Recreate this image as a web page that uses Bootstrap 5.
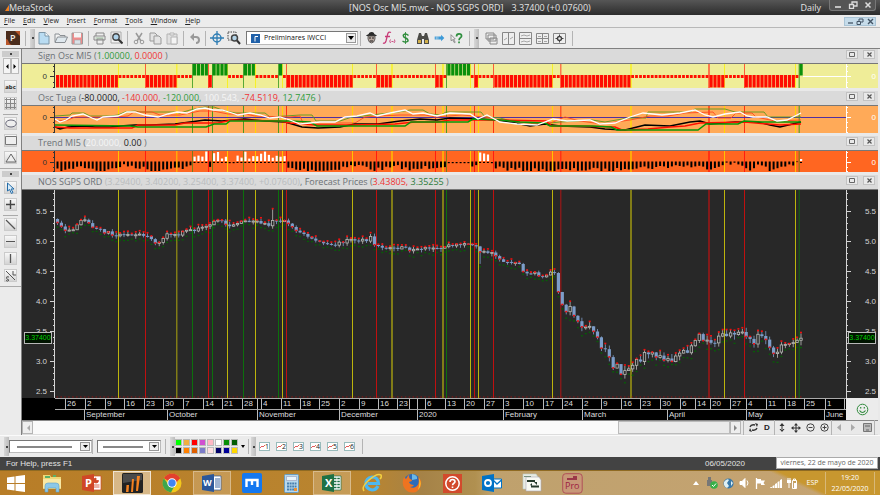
<!DOCTYPE html>
<html lang="en">
<head>
<meta charset="utf-8">
<meta name="viewport" content="width=device-width, initial-scale=1">
<title>MetaStock - NOS SGPS ORD</title>
<link href="https://cdn.jsdelivr.net/npm/bootstrap@5.3.0/dist/css/bootstrap.min.css" rel="stylesheet">
<style>
:root{--ui:"Open Sans","Noto Sans",sans-serif;--arial:"Liberation Sans",Arial,sans-serif}
body{font-family:var(--ui);font-size:8px;line-height:12px;color:#222;background:#e9e9e9;min-height:100vh}
button,select{font-family:inherit;font-size:inherit;line-height:inherit;color:inherit}
svg{display:block;flex:none}
.tbtn{border:0;background:none;padding:0;width:17px;height:17px;display:flex;align-items:center;justify-content:center;flex:none}
.titlebar{height:15px;background:linear-gradient(#565656,#2c2c2c);color:#e4e4e4;font-size:9px;line-height:16px}
.brand-area{width:349px}
.wbtns{height:11px;border-radius:0 0 3px 3px;background:#555;border:1px solid #777;border-top:0}
.wbtns .tbtn{width:15px;height:10px}
.menubar{height:13px;border-bottom:1px solid #b8b8b8;background:#ececec}
.menubar a{color:#222;text-decoration:none;font-size:7px;line-height:12px;margin-right:8px}
.menubar a::first-letter{text-decoration:underline}
.mdi{background:#c6dcea;border:1px solid #a9c4d6;height:9px}
.mdi .tbtn{width:10px;height:7px}
.toolbar{height:21px;border-bottom:1px solid #808080;background:#ebebeb}
.vsep{width:1px;height:15px;background:#b4b4b4;margin:0 2px;flex:none}
.grip{width:5px;height:19px;background:linear-gradient(90deg,#d8d8d8,#bdbdbd);flex:none;display:flex;align-items:center;justify-content:center}
.grip::after{content:"";width:2px;height:2px;background:#444}
.combo{background:#fff;border:1px solid #777;border-right-color:#bbb;border-bottom-color:#bbb}
.combo select{appearance:none;border:0;background:transparent;padding:0;min-width:0;outline:0}
.combo .arrow{width:10px;background:#eee;border:1px solid #999;margin:1px;display:flex;align-items:center;justify-content:center;pointer-events:none}
.toolbar .combo{height:14px;width:112px}
.toolbar .combo .arrow{margin-left:auto}
.tpl{width:84px;font-size:7px;color:#111}
.main-area{padding-right:2px}
.tools{width:22px;background:#ebebeb;border-right:1px solid #808080;flex:none;padding-top:2px}
.tools .tbtn{width:13px;height:13px;margin:0 auto 4px;background:linear-gradient(#f8f8f8,#d4d4d4);border:1px solid #cbcbcb}
.tools .pair{margin:0 auto 6px}
.tools .pair .tbtn{width:8px;height:16px;margin:0;border-color:#bbb;background:#f4f4f4}
.tools .hgrip{height:6px;background:#ccc;display:flex;align-items:center;justify-content:center;margin:0 2px 1px}
.tools .hgrip::after{content:"";width:2px;height:2px;background:#444}
.tools hr{margin:0 3px 2px;border:0;border-top:1px solid #aaa;opacity:1}
.tools hr.full{margin:0 0 2px}
.abc{font-size:6px;font-weight:700;line-height:8px}
.chart-title{height:15px;background:#dadada;border-bottom:1px solid #777;color:#6c7176;font-size:9px;line-height:14px;padding-left:16px;padding-right:2px}
.chart-title .tbtn{width:12px;height:9px;background:#e9e9e9;border:1px solid #c2c2c2;margin:1px 1px 4px}
.g{color:#2f9a3a}.r{color:#f03434}.k{color:#222}.w{color:#f6f6f6}.dim{color:#b9bcbe}.dg{color:#2c7a3a}
.strip{border-bottom:3px solid #e9e9e9}
.h-sign{height:24px;background:#efed98}
.h-osc{height:27px;background:#ffaa58}
.h-trend{height:21px;background:#ff6621}
.h-price{min-height:208px;background:#282828}
.axis-l{width:33px;flex:none;position:relative}
.axis-r{width:32px;flex:none;position:relative}
.axis-l svg,.axis-r svg,.plot svg{position:absolute;inset:0;width:100%;height:100%}
.plot{position:relative;flex:1 1 0;min-width:0}
.tick-label{position:absolute;transform:translateY(-50%);font-family:var(--arial);font-size:8px;line-height:10px}
.axis-l .tick-label{right:8px}
.axis-r .tick-label{right:2px}
.axis-l .price-tag{right:3px}
.price-tag{background:#001400;color:#00d000;border:1px solid #b8b8b8;padding:0;width:28px;text-align:center;font-size:7px}
.dates{height:23px;background:#000;color:#ddd;font-family:var(--arial);font-size:8px;line-height:10px;border-bottom:1px solid #888}
.dates .pad-l{width:33px;flex:none}
.dates .smile{width:32px;flex:none;background:#ececec}
.cal{flex:1 1 0;min-width:0}
.cal>div{height:11px;border-top:1px solid #aaa}
.cell{flex:none;border-left:1px solid #bbb;padding-left:1px;white-space:nowrap;height:10px}
.cell.lead-in{border-left:0}
.scroller{height:14px;border-bottom:1px solid #ddd}
.scroller .sb{width:12px;height:13px;border:1px solid #b5b5b5;background:#eee}
.scroller .track{background:#fafafa;flex:1 1 0}
.scroller .thumb{width:16%;background:#eaeaea;border:1px solid #bbb}
.scroller .tbtn{width:14px;height:13px}
.scroller .sb.tbtn{width:11px}
.scroller .right{width:137px;flex:none}
.periodicity{font-family:var(--arial);font-weight:700;font-size:8px}
.bottombar{height:22px;background:#ebebeb;border-top:1px solid #fafafa}
.bottombar .combo{height:13px}
.bottombar .combo select{flex:1;background:linear-gradient(#888,#888) center/80% 2px no-repeat}
.style-combo{width:83px}
.weight-combo{width:64px}
.swatches{display:grid;grid-template-columns:repeat(8,8px);grid-auto-rows:8px}
.swatches button{width:7px;height:7px;border:1px solid #bbb;padding:0}
.tbtn.more{width:7px}
.num{border:1px solid #9bb;background:#fff;width:11px;height:9px;color:#222;font-size:7px;line-height:7px;display:flex;align-items:center;justify-content:flex-end}
.statusbar{height:13px;background:#434343;color:#e2e2e2;font-family:var(--arial);font-size:8px;line-height:13px;position:relative}
.help-text{padding-left:6px}
.status-date{padding-right:135px}
.hint{position:absolute;right:2px;top:0;height:12px;width:102px;background:#fff;color:#666;border:1px solid #aaa;font-family:var(--ui);font-size:7px;line-height:10px;text-align:center;white-space:nowrap}
.taskbar{height:25px;border-top:1px solid #8f6a22;background:linear-gradient(205deg,#c8972f 0,#c8972f 11%,transparent 12%),linear-gradient(90deg,#b87d27 0,#b98530 42%,#a58247 48%,#b09050 54%,#bfa16d 56%,#c6a473 100%);color:#fff}
.taskbar .app{width:40px;height:24px;border:1px solid transparent;background:none;padding:0;display:flex;align-items:center;justify-content:center;flex:none}
.taskbar .app.winkey{width:32px}
.taskbar .app.open{background:#ffffff30;border-color:#ffffff50;margin:0 1px;width:38px}
.taskbar .app.active{background:#ffffff70;border-color:#ffffffa0}
.tray .tbtn{width:16px}
.lang{font-size:7px;width:25px}
.clock{width:50px;font-size:7px;line-height:11px;border-left:1px solid #d8b878;border-right:1px solid #d8b878}
.edge{width:5px}
</style>
<script src="https://cdn.jsdelivr.net/npm/bootstrap@5.3.0/dist/js/bootstrap.bundle.min.js"></script>
</head>
<body class="d-flex flex-column m-0">

<header class="titlebar d-flex">
  <div class="brand-area d-flex align-items-center">
    <svg class="ms-1" width="5" height="9" viewBox="0 0 5 9"><path d="M1 8 5 2v6z" fill="#f08020"/></svg><span class="fs-brand">MetaStock</span>
  </div>
  <div class="text-nowrap">[NOS Osc MI5.mwc - NOS SGPS ORD]<span class="ms-2">3.37400 (+0.07600)</span></div>
  <div class="ms-auto me-2">Daily</div>
  <div class="wbtns d-flex me-1">
    <button class="tbtn" aria-label="Minimize"><svg width="8" height="8"><path d="M1 6h6" stroke="#ddd" stroke-width="1.6"/></svg></button>
    <button class="tbtn" aria-label="Restore"><svg width="10" height="8" fill="none" stroke="#ddd"><path d="M4 4V1h5v4H6M1.500 3.500h4v4h-4z" stroke-width="1.300"/></svg></button>
    <button class="tbtn" aria-label="Close"><svg width="8" height="8"><path d="m1.500 1.500 5 5m0-5-5 5" stroke="#ddd" stroke-width="1.500"/></svg></button>
  </div>
</header>

<nav class="menubar d-flex align-items-center ps-1" aria-label="Menu">
  <a href="#">File</a><a href="#">Edit</a><a href="#">View</a><a href="#">Insert</a><a href="#">Format</a><a href="#">Tools</a><a href="#">Window</a><a href="#">Help</a>
  <div class="mdi d-flex ms-auto me-1">
    <button class="tbtn" aria-label="Minimize chart"><svg width="7" height="6"><path d="M1 5h5" stroke="#456" stroke-width="1.300"/></svg></button>
    <button class="tbtn" aria-label="Restore chart"><svg width="8" height="7" fill="none" stroke="#456"><path d="M3 3V1h4v3H5M1 3.500h3.500v3H1z"/></svg></button>
    <button class="tbtn" aria-label="Close chart"><svg width="7" height="7"><path d="m1 1 5 5m0-5-5 5" stroke="#456" stroke-width="1.400"/></svg></button>
  </div>
</nav>

<div class="toolbar d-flex align-items-center" role="toolbar" aria-label="Standard">
  <button class="tbtn ms-1" aria-label="Power Console"><svg width="14" height="14"><rect width="14" height="14" fill="#4a2c1c"/><path d="M0 8c3 0 2 5 6 6H0zM9 0h5v5z" fill="#b8562a"/><text x="4" y="10" font-size="9" font-weight="600" fill="#f5eee8">P</text></svg></button>
  <span class="vsep ms-1 me-1"></span><span class="grip"></span>
  <button class="tbtn" aria-label="New"><svg width="12" height="14"><path d="M1 1.500h6l4 3.500v8H1z" fill="#b9dcf2" stroke="#7d97a8"/><path d="M7 1.500V5h4" fill="#fff" stroke="#7d97a8"/></svg></button>
  <button class="tbtn" aria-label="Open"><svg width="14" height="12"><path d="M1 10V2h4l1 1.500h5V5" fill="#f4f4f4" stroke="#8a8f94"/><path d="M1 10.500 3.500 5h10L11 10.500z" fill="#dfe8ee" stroke="#8a8f94"/></svg></button>
  <button class="tbtn" aria-label="Save"><svg width="13" height="13"><path d="M1 1h10.500v11H1z" fill="#f08c8c" stroke="#9a9a9a"/><path d="M3 1h7v4.500H3z" fill="#f5f5f5"/><path d="M3.500 8h6v4h-6z" fill="#d9e2e8" stroke="#aaa" stroke-width=".6"/></svg></button>
  <span class="vsep"></span>
  <button class="tbtn" aria-label="Print"><svg width="13" height="13" fill="#eee" stroke="#888"><path d="M3 4V1h8v3M1 4h11v4H1zM4 7h6v5H4z"/><path d="M2.500 6h8" stroke="#9b9"/></svg></button>
  <button class="tbtn" aria-label="Preview"><svg width="13" height="14"><path d="M1 1h10v11H1z" fill="#f2f2f2" stroke="#aaa"/><circle cx="6" cy="6" r="3.200" fill="#aed2ea" stroke="#444" stroke-width="1.400"/><path d="m8.500 8.500 4 4" stroke="#333" stroke-width="2"/></svg></button>
  <span class="vsep"></span>
  <button class="tbtn" aria-label="Cut"><svg width="12" height="13" fill="none" stroke="#999"><path d="m3 1 5 8M9 1 4 9" stroke-width="1.500"/><circle cx="3" cy="10" r="1.800"/><circle cx="9" cy="10" r="1.800"/></svg></button>
  <button class="tbtn" aria-label="Copy"><svg width="13" height="13" fill="#e4e4e4" stroke="#999"><path d="M1 1h5l2 2v6H1z"/><path d="M5 4h5l2 2v6H5z"/></svg></button>
  <button class="tbtn" aria-label="Paste"><svg width="13" height="13" fill="#e0e0e0" stroke="#b4b4b4"><path d="M1 2h10v10H1z"/><path d="M4 1h4v2H4zM5 5h6v7H5z" fill="#f4f4f4"/></svg></button>
  <span class="vsep"></span>
  <button class="tbtn" aria-label="Undo"><svg width="12" height="12"><path d="M3 5h4q3 0 3 3t-3 3" fill="none" stroke="#999" stroke-width="2"/><path d="M1 5l4-4v8z" fill="#999"/></svg></button>
  <span class="vsep"></span>
  <button class="tbtn" aria-label="Crosshair"><svg width="14" height="14" fill="none" stroke="#2f7db4"><circle cx="7" cy="7" r="4" stroke-width="1.400"/><path d="M7 0v14M0 7h14" stroke-width="1.300"/></svg></button>
  <button class="tbtn" aria-label="Zoom box"><svg width="14" height="14"><path d="M1 1h8v8H1z" fill="none" stroke="#444" stroke-dasharray="1.500 1"/><circle cx="7.500" cy="7" r="3" fill="#b4d4e8" stroke="#444" stroke-width="1.500"/><path d="m10 9.500 3 3.500" stroke="#333" stroke-width="2"/></svg></button>
  <div class="combo d-flex align-items-center ms-1">
    <svg class="ms-1" width="9" height="9"><rect width="9" height="9" fill="#1e5fa8"/><path d="M4 7.500v-5h3" stroke="#fff" fill="none"/></svg>
    <select aria-label="Template" class="ms-1 tpl"><option>Preliminares IWCCI</option></select>
    <span class="arrow align-self-stretch"><svg width="6" height="4"><path d="M0 0h6L3 4z"/></svg></span>
  </div>
  <span class="vsep"></span>
  <button class="tbtn" aria-label="Expert Advisor"><svg width="13" height="14"><path d="M1 5c1-2 3-1 3-3q3-2 5 0c0 2 2 1 3 3z" fill="#2a2a2a"/><path d="M3 5h7v3q-1 4-3.500 4T3 8z" fill="#b8a8a0" stroke="#444" stroke-width=".8"/><path d="M4 7h2m1 0h2M5 10h3" stroke="#222"/></svg></button>
  <button class="tbtn" aria-label="Indicator Builder"><svg width="14" height="14" fill="none" stroke="#c83c78"><path d="M9 1.500Q6 0 5.500 4L4 10q-1 3-3 2M3 5.500h5" stroke-width="1.300"/><path d="M8.500 8.500q-1.500 1.500 0 3.500m4-3.500q1 2-.5 3.500M9.500 10.500h2" stroke-width=".9"/></svg></button>
  <button class="tbtn" aria-label="System Tester"><svg width="9" height="12" viewBox="0 0 10 14" fill="none" stroke="#2e8b3a"><path d="M8.500 4Q5 1 2.500 3.500 2 6 5 7t3 3.500Q5 13 1.500 10.500" stroke-width="1.700"/><path d="M5 0v14"/></svg></button>
  <button class="tbtn" aria-label="Explorer"><svg width="14" height="13" fill="#4c4c48"><path d="M3 1h2l1 3h2l1-3h2l2 7v4H8V7H6v5H1V8z"/><path d="M2 8h3v3H2zM9 8h3v3H9z" fill="#d2b04a"/></svg></button>
  <button class="tbtn" aria-label="Downloader"><svg width="13" height="8" viewBox="0 0 14 10"><path d="M1 3h8V1l4 4-4 4V7H1z" fill="#3c9ad8"/><path d="M3 3v4m2-4v4" stroke="#ebebeb" stroke-width=".7"/></svg></button>
  <button class="tbtn" aria-label="Help pointer"><svg width="13" height="11" viewBox="0 0 15 13" fill="none"><path d="m1 2 5 5-2 .5L6 11l-1 .5L3 8 1 9z" fill="#eee" stroke="#666" stroke-width=".8"/><path d="M7.500 4q0-3 3-3t3 2.500c0 2-3 2-3 5M10.500 10v2" stroke="#2f8f3f" stroke-width="2"/></svg></button>
  <span class="vsep ms-1 me-1"></span><span class="grip"></span>
  <button class="tbtn ms-1" aria-label="Cascade"><svg width="13" height="13" fill="#eee" stroke="#888"><path d="M1 1h8v6H1zM3 3h8v6H3zM5 6h7v6H5z"/></svg></button>
  <button class="tbtn" aria-label="Tile columns"><svg width="13" height="13" fill="#eee" stroke="#888"><path d="M.5.5h12v12H.5zM6.500.5v12"/><path d="M2 8l3-2m3 1 3-2" stroke-width=".7"/></svg></button>
  <button class="tbtn" aria-label="Tile rows"><svg width="13" height="13" fill="#eee" stroke="#888"><path d="M.5.5h12v12H.5zM.5 6.500h12"/><path d="M2 4l3-1 3 1 3-1M2 10l3-1 3 1 3-1" stroke-width=".7"/></svg></button>
  <button class="tbtn" aria-label="Tile"><svg width="13" height="11" fill="#eee" stroke="#888"><path d="M.5.5h12v10H.5zM6.500.5v10M.5 5.500h12"/><path d="M2 3.500h3m3 0h3M2 8.500h3m3 0h3" stroke-width=".7"/></svg></button>
  <button class="tbtn" aria-label="Options"><svg width="13" height="11" fill="#eee" stroke="#888"><path d="M.5.5h12v10H.5z"/><circle cx="6.500" cy="5.500" r="2" stroke="#444" stroke-width="1.400"/><path d="M6.500 1.500v8m-4-4h8" stroke-dasharray="1.500 5" stroke="#444"/></svg></button>
  <span class="vsep ms-1"></span>
</div>

<main class="main-area d-flex flex-grow-1">
  <aside class="tools d-flex flex-column" aria-label="Drawing tools">
    <div class="hgrip"></div>
    <div class="pair d-flex"><button class="tbtn" aria-label="Previous"><svg width="4" height="5"><path d="M3.500 0v5L1 2.500z"/></svg></button><button class="tbtn" aria-label="Next"><svg width="4" height="5"><path d="M.5 0v5L3 2.500z"/></svg></button></div>
    <button class="tbtn" aria-label="Text"><span class="abc">abc</span></button>
    <button class="tbtn" aria-label="Grid"><svg width="11" height="11" stroke="#888"><path d="M1.500 0v11m4-11v11m4-11v11M0 1.500h11m-11 4h11m-11 4h11"/></svg></button>
    <hr>
    <button class="tbtn" aria-label="Ellipse"><svg width="12" height="9"><ellipse cx="6" cy="4.500" rx="5.300" ry="3.500" fill="#eee" stroke="#667"/></svg></button>
    <button class="tbtn" aria-label="Rectangle"><svg width="12" height="9"><path d="M.5.5h11v8H.5z" fill="#eee" stroke="#777"/></svg></button>
    <button class="tbtn" aria-label="Triangle"><svg width="12" height="10"><path d="M6 1l5 8H1z" fill="#eee" stroke="#666"/></svg></button>
    <hr class="full"><div class="hgrip mb-1"></div>
    <button class="tbtn" aria-label="Select"><svg width="9" height="12"><path d="M1.500 1v8l2-1.500 2 4 1.500-1-2-3.500H8z" fill="#d8ecfa" stroke="#246ca8"/></svg></button>
    <button class="tbtn" aria-label="Add"><svg width="11" height="11"><path d="M5.500 1v9M1 5.500h9" stroke="#444" stroke-width="1.400"/></svg></button>
    <hr>
    <button class="tbtn" aria-label="Trend line"><svg width="11" height="11"><path d="m1 1 9 9" stroke="#555" stroke-width="1.200"/></svg></button>
    <button class="tbtn" aria-label="Horizontal line"><svg width="11" height="11"><path d="M1 5.500h9" stroke="#555"/></svg></button>
    <button class="tbtn" aria-label="Vertical line"><svg width="11" height="11"><path d="M5.500 1v9" stroke="#555" stroke-width="1.300"/></svg></button>
    <button class="tbtn" aria-label="Speed line"><svg width="12" height="12" fill="none" stroke="#555"><path d="m1 1 9 9M8 1v4h3M4 7Q1 6 1.500 8T4 10q-1 2-3 .5"/></svg></button>
    <hr class="full">
  </aside>

  <section class="flex-grow-1 d-flex flex-column">
    <div class="chart-title d-flex"><span>Sign Osc MI5 (<span class="g">1.00000,</span> <span class="r">0.0000</span> )</span><span class="winbtns d-flex ms-auto"></span></div>
    <div class="strip"><div class="h-sign d-flex" data-chart="sign"></div></div>
    <div class="chart-title d-flex"><span>Osc Tuga (<span class="k">-80.0000,</span> <span class="r">-140.000,</span> <span class="g">-120.000,</span> <span class="w">100.543,</span> <span class="r">-74.5119,</span> <span class="g">12.7476</span> )</span><span class="winbtns d-flex ms-auto"></span></div>
    <div class="strip"><div class="h-osc d-flex" data-chart="osc"></div></div>
    <div class="chart-title d-flex"><span>Trend MI5 (<span class="w">20.0000,</span> <span class="k">0.00</span> )</span><span class="winbtns d-flex ms-auto"></span></div>
    <div class="strip"><div class="h-trend d-flex" data-chart="trend"></div></div>
    <div class="chart-title d-flex"><span>NOS SGPS ORD <span class="dim">(3.29400, 3.40200, 3.25400, 3.37400, +0.07600)</span>, Forecast Prices (<span class="r">3.43805,</span> <span class="dg">3.35255</span> )</span><span class="winbtns d-flex ms-auto"></span></div>
    <div class="h-price d-flex flex-grow-1" data-chart="price"></div>
    <div class="dates d-flex"><div class="pad-l"></div><div class="cal"><div class="d-flex" id="weeks"></div><div class="d-flex" id="months"></div></div>
      <div class="smile d-flex align-items-center justify-content-center"><svg width="13" height="13" fill="none" stroke="#2f8a3c"><circle cx="6.500" cy="6.500" r="5.300"/><path d="M3.500 7.500q3 4 6 0M4.700 4v1.500M8.300 4v1.500" stroke-width="1.200"/></svg></div></div>
    <div class="scroller d-flex align-items-center">
      <button class="sb tbtn" aria-label="Scroll left"><svg width="4" height="6"><path d="M4 0v6L1 3z" fill="#aaa"/></svg></button>
      <div class="track d-flex justify-content-end align-self-stretch"><div class="thumb"></div></div>
      <button class="sb tbtn" aria-label="Scroll right"><svg width="4" height="6"><path d="M0 0v6l3-3z" fill="#888"/></svg></button>
      <div class="right d-flex align-items-center">
        <span class="vsep"></span>
        <button class="tbtn" aria-label="Refresh"><svg width="9" height="9" fill="none" stroke="#333" stroke-width="1.300"><path d="M1 4q1-3 5-2M8 5q-1 3-5 2"/><path d="M6 0l3 1-1 3zM3 9 0 8l1-3z" fill="#333" stroke="none"/></svg></button>
        <button class="tbtn periodicity" aria-label="Daily periodicity">D</button>
        <span class="vsep mx-0"></span>
        <button class="tbtn" aria-label="Vertical fit"><svg width="6" height="9"><path d="M3 0l2.500 3h-5zM3 9l2.500-3h-5zM2.500 2h1v5h-1z" fill="#333"/></svg></button>
        <button class="tbtn" aria-label="Pan"><svg width="10" height="10"><path d="M5 1v8M1 5h8" stroke="#333"/><path d="M5 0l2 2.500H3zM5 10l2-2.500H3zM0 5l2.500-2v4zM10 5 7.500 3v4z" fill="#333"/></svg></button>
        <button class="tbtn" aria-label="Zoom out"><svg width="9" height="9" fill="none" stroke="#444"><circle cx="4.500" cy="4.500" r="3.700"/><path d="M2.500 4.500h4"/></svg></button>
        <button class="tbtn" aria-label="Zoom in"><svg width="9" height="9" fill="none" stroke="#444"><circle cx="4.500" cy="4.500" r="3.700"/><path d="M2.500 4.500h4m-2-2v4"/></svg></button>
        <span class="vsep mx-0"></span>
        <button class="tbtn" aria-label="Back"><svg width="4" height="7"><path d="M4 0v7L0 3.500z" fill="#aaa"/></svg></button>
        <button class="tbtn" aria-label="Forward"><svg width="4" height="7"><path d="M0 0v7l4-3.500z" fill="#aaa"/></svg></button>
        <button class="tbtn" aria-label="Disk"><svg width="9" height="9"><path d="M.5.5h8v8h-8z" fill="#bbb" stroke="#777"/><path d="M2 3h5M3 7h3" stroke="#666"/></svg></button>
        <span class="vsep mx-0"></span>
      </div>
    </div>
  </section>
</main>

<div class="bottombar d-flex align-items-center" role="toolbar" aria-label="Line style">
  <span class="grip ms-1"></span>
  <div class="combo d-flex align-items-stretch style-combo"><select aria-label="Line style"><option></option></select><span class="arrow"><svg width="5" height="3"><path d="M0 0h5L2.500 3z"/></svg></span></div>
  <span class="vsep mx-1 ms-0"></span>
  <div class="combo d-flex align-items-stretch weight-combo"><select aria-label="Line weight"><option></option></select><span class="arrow"><svg width="5" height="3"><path d="M0 0h5L2.500 3z"/></svg></span></div>
  <span class="vsep mx-1"></span><span class="grip"></span>
  <div class="swatches" id="swatches"></div>
  <button class="tbtn more" aria-label="More colours"><svg width="4" height="3"><path d="M0 0h4L2 3z"/></svg></button>
  <span class="vsep"></span><span class="grip"></span>
  <div class="d-flex" id="layouts"></div>
  <span class="vsep ms-1"></span>
</div>

<footer class="statusbar d-flex">
  <span class="help-text">For Help, press F1</span>
  <span class="status-date ms-auto">06/05/2020</span>
  <div class="hint" role="tooltip">viernes, 22 de mayo de 2020</div>
</footer>

<nav class="taskbar d-flex align-items-center" aria-label="Taskbar">
  <button class="app winkey" aria-label="Start"><svg width="18" height="17" fill="#fff"><path d="m0 2.500 7.500-1v6.500H0zM8.500 1.300 18 0v8H8.500zM0 9h7.500v6.500L0 14.500zM8.500 9H18v8l-9.500-1.300z"/></svg></button>
  <button class="app" aria-label="File Explorer"><svg width="21" height="20"><path d="M1 2h7l1 2h10v12H1z" fill="#f0d878"/><path d="M3 3h5v2H3zM11 2h3v2h-3z" fill="#5bb06a"/><path d="M1 6h18v9H1z" fill="#f8e8a4"/><path d="M3 19v-6q0-3 3-3h8q3 0 3 3v6h-3v-4H6v4z" fill="#8cc8e8" stroke="#5fa0c8" stroke-width=".6"/></svg></button>
  <button class="app" aria-label="PowerPoint"><svg width="20" height="20"><path d="M9 3h10v14H9z" fill="#fff" stroke="#d04727" stroke-width=".7"/><path d="M14 5a2.500 2.500 0 1 0 2.500 2.500H14zM11.500 12h6m-6 2h6" fill="#d04727" stroke="#d04727" stroke-width=".8"/><path d="M0 3 12 1v18L0 17z" fill="#d04727"/><text x="3" y="14" font-size="11" font-weight="700" fill="#fff">P</text></svg></button>
  <button class="app open active" aria-label="MetaStock"><svg width="21" height="20"><rect width="21" height="20" rx="1.500" fill="#222"/><path d="M1 1h19v6L1 10z" fill="#666" opacity=".6"/><path d="m4 19 .5-7H7l-.5 7zM9 19l1-13h2l-1 13zM14 18l1-15h3l-2 15z" fill="#f58220"/></svg></button>
  <button class="app" aria-label="Chrome"><svg width="20" height="20"><circle cx="10" cy="10" r="9.500" fill="#f3c81c"/><path d="M10 10 1.800 5.200A9.500 9.500 0 0 1 18.200 5.200z" fill="#e2412e"/><path d="M1.800 5.200A9.500 9.500 0 0 0 9 19.500L13 12 6 11z" fill="#3ea64c"/><path d="M10 5h8.200L14 10z" fill="#e2412e"/><circle cx="10" cy="10" r="4.700" fill="#fff"/><circle cx="10" cy="10" r="3.700" fill="#4285f4"/></svg></button>
  <button class="app open" aria-label="Word"><svg width="20" height="20"><path d="M9 3h10v14H9z" fill="#fff" stroke="#2b579a" stroke-width=".7"/><path d="M13 6h5m-5 2h5m-5 2h5m-5 2h5m-5 2h5" stroke="#2b579a" stroke-width=".9"/><path d="M0 3 12 1v18L0 17z" fill="#2b579a"/><text x="1" y="13" font-size="9" font-weight="700" fill="#fff">W</text></svg></button>
  <button class="app" aria-label="Maxthon"><svg width="20" height="20"><rect width="20" height="20" rx="2" fill="#1478f0"/><path d="M4.500 14V7h11v7M10 8v4" fill="none" stroke="#fff" stroke-width="2.400"/></svg></button>
  <button class="app" aria-label="Calculator"><svg width="16" height="19"><rect x=".5" y=".5" width="14" height="18" rx="1" fill="#b8d8ec" stroke="#6a9cc0"/><path d="M2.500 2.500h10v4h-10z" fill="#e8f4fc" stroke="#88a" stroke-width=".5"/><path d="M3 9.500h9.500M3 12.500h9.500M3 15.500h9.500" stroke="#4880b0" stroke-width="2" stroke-dasharray="2 .6"/><path d="M10 14h3v3h-3z" fill="#f09030"/></svg></button>
  <button class="app open" aria-label="Excel"><svg width="20" height="20"><path d="M9 3h10v14H9z" fill="#fff" stroke="#1e7145" stroke-width=".7"/><path d="M12 5.500h6m-6 3h6m-6 3h6m-6 3h6" stroke="#1e7145" stroke-width="1.600" stroke-dasharray="2.500 .8"/><path d="M0 3 12 1v18L0 17z" fill="#1e7145"/><text x="3" y="14" font-size="11" font-weight="700" fill="#fff">X</text></svg></button>
  <button class="app" aria-label="Internet Explorer"><svg width="20" height="20" fill="none"><path d="M16 13q-2 4-6 4-6-1-6-6.500T10 4q6 0 6.500 6.500H6" stroke="#4cb8f0" stroke-width="3.200"/><path d="M2 18Q-1 14 7 7t12-5q1 2-1 4" stroke="#f4d040" stroke-width="1.500"/></svg></button>
  <button class="app" aria-label="Firefox"><svg width="20" height="20"><circle cx="10" cy="9.500" r="8.500" fill="#2c6cb8"/><path d="M10 1q6 1 5 5l-5 1z" fill="#6ab8e8"/><path d="M2 4q-3 7 1 12t11 3q6-4 5-11-1-3-3-4 2 6-1 9t-7 1q3 0 4-2-4 0-5-3l3-1q0-2-2-2-2-3 0-5Q5 3 4 6z" fill="#ee7420"/><path d="M17 5q4 7-1 12 2-6 1-12z" fill="#f8c030"/></svg></button>
  <button class="app" aria-label="Help"><svg width="19" height="19"><rect width="19" height="19" fill="#d24a2c"/><circle cx="9.500" cy="9.500" r="6.700" fill="none" stroke="#fff" stroke-width="1.500"/><path d="M7 8q0-2.500 2.500-2.500T12 7.800c0 1.500-2.500 1.500-2.500 3.500M9.500 12.500v1.600" stroke="#fff" stroke-width="1.600" fill="none"/></svg></button>
  <button class="app" aria-label="Outlook"><svg width="20" height="20"><path d="M10 6h9.500v9H10z" fill="#fff" stroke="#0072c6"/><path d="m11 7 4 4 4.500-4" fill="none" stroke="#0072c6" stroke-width="1.300"/><path d="M0 3 12 1v18L0 17z" fill="#0072c6"/><circle cx="6" cy="10" r="3" fill="none" stroke="#fff" stroke-width="1.800"/></svg></button>
  <button class="app" aria-label="Documents"><svg width="20" height="20"><path d="M1 1h13l2 3v12H1z" fill="#e8ece4" stroke="#bcc" stroke-width=".6"/><path d="M4 4h13l2 3v11H4z" fill="#f8faf4" stroke="#aab" stroke-width=".6"/><path d="M2 3.500h7" stroke="#789080"/><path d="M5 8h8M9 13.500h8" stroke="#263b2c" stroke-width="2"/><path d="M12 9h3v3zM8 12l2-2v3z" fill="#263b2c"/></svg></button>
  <button class="app" aria-label="Pro"><svg width="21" height="21"><rect x=".7" y=".7" width="19.500" height="19.500" rx="3" fill="#c89878" stroke="#b05058"/><path d="M5 6h10m-4-2h4" stroke="#8c1838" stroke-width="1.500"/><text x="3" y="16" font-size="9" fill="#9c2040">Pro</text></svg></button>
  <div class="tray d-flex align-items-center ms-auto">
    <button class="tbtn" aria-label="Show hidden icons"><svg width="6" height="4"><path d="M3 0l3 4H0z" fill="#fff"/></svg></button>
    <button class="tbtn" aria-label="Safely remove"><svg width="12" height="12"><path d="M1 3h5v6H1zM2 0h3v3H2z" fill="#777"/><circle cx="8" cy="8" r="3.800" fill="#38b048"/><path d="m6 8 1.500 1.500L10 6.500" stroke="#fff" fill="none"/></svg></button>
    <button class="tbtn" aria-label="Network globe"><svg width="11" height="11"><circle cx="5.500" cy="5.500" r="5" fill="#3878a8"/><path d="M1 4q3-4 5-2L4 5 6 8 4 10Q0 8 1 4zM8 3l2 2-2 3z" fill="#dff0f4"/></svg></button>
    <button class="tbtn" aria-label="Volume"><svg width="11" height="10" fill="none" stroke="#fff"><path d="M1 3.500h2l3-3v9l-3-3H1z" fill="#fff"/><path d="M8 2.500q2 2.500 0 5"/></svg></button>
    <button class="tbtn" aria-label="Action center"><svg width="11" height="11"><path d="M1.500 0v11" stroke="#fff" stroke-width="1.300"/><path d="M2 1h4v1.500h4L8.500 5 10 7H6V5.500H2z" fill="#fff"/></svg></button>
    <button class="tbtn" aria-label="Signal"><svg width="12" height="9" fill="#fff"><path d="M0 9h2V8L0 8.500zM2.500 9h2V6l-2 1zM5 9h2V4L5 5zM7.500 9h2V2l-2 1zM10 9h2V0l-2 1z"/></svg></button>
    <button class="tbtn" aria-label="Battery"><svg width="11" height="11"><path d="M5.500 2.500h4v8h-4zM6.500 1h2v1.500h-2z" fill="none" stroke="#fff"/><path d="M7 5h2v5H7zM0 2h4v3H2.500v5h-1V5H0zM.5 0h1v2h-1zm2 0h1v2h-1z" fill="#fff"/></svg></button>
    <span class="lang text-center">ESP</span>
    <div class="clock text-center"><div>19:20</div><div>22/05/2020</div></div>
    <span class="edge"></span>
  </div>
</nav>

<script>
// Horizontal chart units run from X0 (left axis) to X1 (right axis).
const X0 = 55, X1 = 846, N = 191, STEP = 743.5 / 190;
const px = i => 57.5 + i * STEP;
let seed = 7;
const rnd = () => (seed = (seed * 16807) % 2147483647) / 2147483647;
const at = (pts, x) => {
  for (let i = 1; i < pts.length; i++) if (x <= pts[i][0]) {
    const [a, b] = pts[i - 1], [c, d] = pts[i];
    return b + (d - b) * Math.max(0, x - a) / (c - a);
  }
  return pts[pts.length - 1][1];
};
const rect = (x, y, w, h, f, extra = '') => `<rect x="${x.toFixed(1)}" y="${y.toFixed(1)}" width="${w}" height="${h.toFixed(1)}" fill="${f}" ${extra}/>`;

// Signal markers: position, colour, width
const Y = 'y', R = 'r', G = 'g';
const signals = [[118,Y,1],[145,R,1],[176,Y,1.5],[192,G,1],[208,R,1],[212,G,1],[227,Y,1],[243,G,1],[255,Y,1],[278,G,1],[282,Y,1],[286,R,1],[352,Y,1],[376,R,1],[391,Y,2],[435,R,1],[442,Y,2],[446,G,1],[470,Y,1],[474,R,1],[478,Y,1],[493,R,1],[552,Y,1],[560,R,1.5],[630,Y,2],[708,R,2],[724,Y,1],[744,R,1],[795,Y,1],[798.5,G,1.5]];
const lines = (y, h, col, wideOpacity) => signals.map(([x, c, w]) => rect(x, y, w, h, col[c], w > 1 ? `opacity="${wideOpacity}"` : '')).join('');

// Sign oscillator: each entry is the start of a run and its value
const runs = [[0,-1],[118,0],[145,-1],[176,0],[192,1],[207,-1],[212,1],[228,0],[242,1],[255,0],[277.5,1],[281,0],[285.5,-1],[352,0],[375.5,-1],[392,0],[434,-1],[443,0],[446,1],[470,0],[473,-1],[478,0],[492,-1],[552,0],[559,-1],[630,0],[708,-1],[724,0],[744,-1],[795,0],[799,1]];
function sign() {
  let s = lines(64, 24, {y:'#f7f028', r:'#ff5a38', g:'#58a838'}, .8);
  for (let i = 0; i < N; i++) {
    const x = px(i); let v = 0;
    for (const r of runs) if (x >= r[0]) v = r[1];
    s += v ? rect(x - 1.5, v > 0 ? 64 : 75, 3.2, v > 0 ? 11.5 : 12.5, v > 0 ? '#0a900a' : '#ff0c00') : rect(x - 1.5, 75, 2.8, 3, '#ff1000');
  }
  return s + rect(803, 76, 43, 1, '#fff');
}
function osc() {
  const L = (c, w, p) => `<polyline points="${p}" fill="none" stroke="${c}" stroke-width="${w}"/>`;
  return lines(106, 27, {y:'#ffd800', r:'#ff3010', g:'#4c9a20'}, .7)
    + rect(55, 117, 791, 1, '#5030a0')
    + L('#5a9a20', .9, '55,116 70,115 72,113 84,113 90,116 110,116 118,115 125,112 135,111 140,112 175,112 180,113 190,110 205,107 214,107 225,111 236,113 265,113 270,117 300,115 312,115 316,121 340,121 352,117 363,116 380,114 398,112 410,110 423,110 430,114 441,115 446,112 481,112 485,117 500,118 515,122 540,124 560,122 578,121 592,120 605,122 628,118 632,118 646,118 648,112 690,112 695,109 725,109 735,112 764,112 768,117 801,117')
    + L('#ff4a20', .9, '55,121 68,120 75,117 115,117 128,116 134,112 152,112 160,115 180,115 200,111 213,111 228,114 245,114 255,116 290,117 300,116 303,123 355,123 365,117 378,116 400,115 425,115 435,117 462,115 485,117 505,121 530,123 548,124 565,117 580,121 602,124 630,120 650,116 668,116 685,113 713,112 718,118 731,118 736,113 752,113 756,117 775,121 801,120')
    + L('#000', 1.4, '55,127 60,129 68,127 84,126 95,127 110,127 120,126 135,125 150,125 175,124 190,122 205,120 222,121 245,119 265,121 285,122 292,124 302,127 318,128 340,127 355,124 378,124 400,121 420,119 437,120 450,118 480,119 495,120 515,123 530,126 545,124 560,126 590,127 605,129 625,130 645,125 670,126 690,122 700,121 710,124 735,122 757,122 770,125 780,127 801,122')
    + L('#ff1000', 1.5, '55,127 70,128 132,128 138,125 175,125 185,123 218,123 232,120 280,121 290,123 315,125 352,125 395,124 415,122 437,122 450,120 500,120 546,121 552,126 575,126 615,127 622,130 648,129 670,127 685,126 700,123 745,122 780,125 801,124')
    + L('#089608', 1.5, '55,125 130,126 138,127 206,127 214,124 226,124 230,121 290,121 310,122 317,126 405,126 411,122 468,122 473,119 500,120 520,122 545,123 550,126 592,126 611,127 617,130 698,130 706,124 738,124 744,121 762,122 801,122')
    + L('#fff', 1.3, '55,119 60,122 66,120 72,116 83,114 92,118 97,120 103,117 118,116 127,112 135,112 145,115 158,117 168,114 177,112 187,113 197,109 205,108 213,110 222,110 232,113 238,115 250,113 260,115 270,118 280,117 290,120 300,124 320,122 335,122 345,117 357,116 370,113 377,116 390,113 405,110 413,114 423,113 437,116 450,113 470,114 478,119 487,115 500,122 517,124 537,125 553,119 567,121 590,120 600,124 615,123 630,117 643,113 662,115 680,113 695,110 705,115 713,117 725,114 740,112 747,116 753,117 767,117 777,121 787,120 801,113');
}
const trendDown = [[55,9],[68,9],[76,5],[90,6],[98,9],[108,9],[118,5],[130,4],[145,7],[152,9],[160,9],[170,5],[176,7],[192,5],[286,6],[296,8],[330,9],[345,5],[360,4],[375,8],[385,7],[400,5],[412,9],[425,6],[445,4],[494,5],[510,8],[545,9],[590,8],[615,9],[625,6],[655,6],[680,4],[705,6],[715,6],[722,2],[740,3],[752,8],[760,3],[770,9],[785,4],[801,2]];
function trend() {
  let s = lines(151, 21, {y:'#ffc400', r:'#ff1c10', g:'#7c7a18'}, .7);
  for (let i = 0; i < N; i++) {
    const x = px(i), n = rnd();
    const up = (x > 192 && x < 286 && !(x > 207.5 && x < 212) && !(x > 228 && x < 234)) || (x > 478 && x < 490) || x > 798;
    const flat = (x > 446 && x < 472) || (x >= 490 && x < 494) || (x > 228 && x < 234);
    if (up) { const h = x > 798 ? 2 : x > 478 ? 9 - (x - 478) * .25 : 2 + n * 8; s += rect(x - 1, 161 - h, 2.2, h, '#fff') + rect(x - 1, 162, 2, 1, '#000'); }
    else if (flat) s += rect(x - 1, 162, 2, 1.2, '#000');
    else s += rect(x - 1, 161.5, 2, Math.min(9.5, at(trendDown, x) + n * 4 - 2), '#000');
  }
  return s;
}
const close = [[57,222],[62,228],[66,230],[74,229],[78,225],[83,219],[87,221],[90,225],[95,228],[102,231],[112,234],[118,235],[130,233],[140,235],[148,236],[152,240],[158,244],[161,243],[164,237],[168,234],[177,236],[185,231],[195,230],[200,227],[205,226],[208,229],[213,222],[220,221],[230,226],[237,223],[250,221],[258,222],[266,224],[270,225],[273,219],[280,221],[290,223],[296,231],[305,235],[313,239],[322,243],[330,246],[340,243],[347,240],[355,240],[368,241],[372,236],[375,246],[385,248],[405,248],[412,251],[425,249],[440,249],[447,245],[452,246],[465,243],[475,246],[480,251],[487,252],[493,251],[497,258],[505,262],[515,261],[520,266],[524,274],[533,273],[545,277],[553,272],[556,273],[558,292],[562,306],[567,310],[571,308],[575,317],[580,326],[585,327],[590,325],[594,332],[598,338],[602,350],[608,353],[613,366],[617,366],[621,376],[625,368],[631,369],[636,358],[641,361],[646,352],[652,353],[658,358],[663,358],[671,360],[677,355],[683,352],[690,352],[694,340],[699,333],[703,340],[711,341],[716,342],[720,336],[727,335],[735,336],[742,333],[746,338],[754,342],[758,335],[765,341],[773,352],[778,351],[784,344],[788,342],[795,345],[801,338]];
function price() {
  let s = lines(190, 208, {y:'#bcb40c', r:'#c01010', g:'#0c700c'}, .6), prev = 219;
  for (let i = 0; i < N; i++) {
    const x = px(i), vol = x > 556 ? 1.7 : 1;
    const c = at(close, x) + (rnd() - .5) * 3 * vol;
    const top = Math.min(prev, c), h = Math.max(1, Math.abs(c - prev)), down = c > prev;
    const hi = top - rnd() * 3 * vol - (Math.abs(x - 273) < 2 ? 9 : 0), lo = top + h + rnd() * 3 * vol + (Math.abs(x - 480.5) < 2 ? 11 : 0);
    const col = down ? '#7d9dc9' : '#b8bab6';
    s += rect(x - .4, hi, .8, lo - hi, col);
    s += down ? rect(x - 1.6, top, 3.2, h, col) : rect(x - 1.2, top, 2.4, h, '#282828', `stroke="${col}" stroke-width=".8"`);
    s += rect(x - 1, down && h > 3 ? top + h - 1 : hi - rnd() * 2, 2, 1.6, '#f01010');
    s += rect(x - 1, lo + 1 + rnd() * 2 * vol, 2, 1.4, '#085c08');
    prev = c;
    if (x < 802) s += rect(x - 1, 396.5, 1.5, 1, '#901010');
  }
  return s;
}

const spec = {
  sign: {y: 64, h: 24, draw: sign, ink: ['#333', '#fff'], labels: [['0', 76.5]], minor: [66, 71, 82, 87], major: [76]},
  osc: {y: 106, h: 27, draw: osc, ink: ['#333', '#fff'], labels: [['0', 118]], minor: [107, 112, 122, 127, 132], major: [117]},
  trend: {y: 151, h: 21, draw: trend, ink: ['#333', '#fff'], labels: [['0', 162.5]], minor: [152, 157, 167, 171], major: [162]},
  price: {y: 190, h: 208, draw: price, ink: ['#d4d4d4', '#d4d4d4'], labels: [5.5, 5, 4.5, 4, 3.5, 3, 2.5].map(v => [v.toFixed(1), 211.5 + (5.5 - v) * 60]), minor: Array.from({length: 34}, (_, i) => 193 + i * 6), major: [211, 241, 271, 301, 331, 361, 391]}
};
const svg = (x, w, s, body) => `<svg viewBox="${x} ${s.y} ${w} ${s.h}" preserveAspectRatio="none" aria-hidden="true">${body}</svg>`;
document.querySelectorAll('[data-chart]').forEach(el => {
  const s = spec[el.dataset.chart], p = el.dataset.chart === 'price';
  const labels = c => s.labels.map(([t, y]) => `<span class="tick-label" style="top:${(y - s.y) / s.h * 100}%;color:${c}">${t}</span>`).join('')
    + (p ? `<span class="tick-label price-tag" style="top:${148 / 208 * 100}%">3.37400</span>` : '');
  const left = s.minor.map(y => rect(53, y, 2, 1, s.ink[0])).join('') + s.major.map(y => rect(50, y, 5, 1, s.ink[0])).join('') + rect(54, s.y, 1, s.h, s.ink[0]);
  const right = s.minor.map(y => rect(846, y, 2, 1, s.ink[1])).join('') + s.major.map(y => rect(846, y, 5, 1, s.ink[1])).join('') + rect(846, s.y, 1, s.h, s.ink[1]);
  el.innerHTML = `<div class="axis-l">${svg(22, 33, s, left)}${labels(s.ink[0])}</div><div class="plot">${svg(X0, X1 - X0, s, s.draw())}</div><div class="axis-r">${svg(846, 32, s, right)}${labels(s.ink[1])}</div>`;
});

const cells = (id, arr) => {
  document.getElementById(id).innerHTML = arr.map(([x, t], i) => {
    const next = i + 1 < arr.length ? arr[i + 1][0] : X1;
    return `<div class="cell${i ? '' : ' lead-in'}" style="width:${(next - x) / (X1 - X0) * 100}%">${t}</div>`;
  }).join('');
};
cells('weeks', [[55,''],[65,'26'],[85,'2'],[105,'9'],[124,'16'],[144,'23'],[163,'30'],[183,'7'],[203,'14'],[222,'21'],[242,'28'],[257,''],[261,'4'],[281,'11'],[300,'18'],[319,'25'],[339,'2'],[359,'9'],[378,'16'],[397,'23'],[409,''],[417,''],[425,'6'],[445,'13'],[464,'20'],[484,'27'],[503,'3'],[523,'10'],[543,'17'],[562,'24'],[582,'2'],[601,'9'],[621,'16'],[640,'23'],[660,'30'],[680,'6'],[695,'14'],[710,'20'],[730,'27'],[746,'4'],[766,'11'],[785,'18'],[804,'25'],[825,'1'],[844,'']]);
cells('months', [[55,''],[84,'September'],[167,'October'],[257,'November'],[339,'December'],[417,'2020'],[503,'February'],[582,'March'],[667,'April'],[746,'May'],[824,'June']]);

document.querySelectorAll('.winbtns').forEach(e => e.innerHTML = '<button class="tbtn me-1" aria-label="Maximize pane"><svg width="6" height="5"><path d="M.5.500h5v4h-5z" fill="none" stroke="#666"/></svg></button><button class="tbtn" aria-label="Close pane"><svg width="5" height="5"><path d="m.5.500 4 4m0-4-4 4" stroke="#555" stroke-width="1.200"/></svg></button>');
document.getElementById('swatches').innerHTML = ['#0f0','#f0b040','#f00','#d050d0','#ffb8c4','#fff','#089008','#045c04','#000','#ff8000','#e06000','#7c7cc8','#ffe0e0','#000068','#000098','#ffd800'].map(c => `<button aria-label="Colour ${c}" style="background:${c}"></button>`).join('');
document.getElementById('layouts').innerHTML = [1,2,3,4,5,6].map(n => `<button class="tbtn" aria-label="Layout ${n}"><span class="num"><svg width="5" height="5"><path d="m0 4 2-2 1 1 2-2" fill="none" stroke="#d33" stroke-width=".8"/></svg>${n}</span></button>`).join('');
</script>
</body>
</html>
